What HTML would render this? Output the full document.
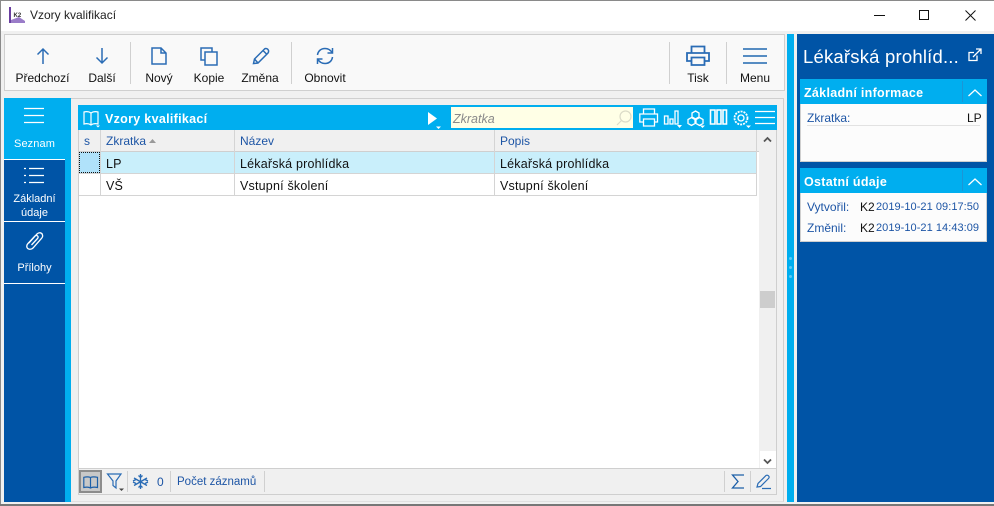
<!DOCTYPE html>
<html><head><meta charset="utf-8">
<style>
html,body{margin:0;padding:0}
body{width:994px;height:506px;position:relative;overflow:hidden;background:#f0f0f0;font-family:"Liberation Sans",sans-serif;font-size:12px;color:#111}
.a{position:absolute}
.t{position:absolute;white-space:nowrap}
.c{text-align:center}
.b{color:#1d55a5}
.r{font-size:12.500px;letter-spacing:.2px}
.h{color:#fff;font-weight:700;font-size:12.500px;letter-spacing:.3px}
.l{font-size:12px;top:71px;color:#111}
svg{position:absolute;overflow:visible}
.tb svg{fill:none;stroke:#2a6cb5;stroke-width:1.5}
.w svg,svg.w{fill:none;stroke:#fff;stroke-width:1.3}
.sep{position:absolute;width:1px;background:#d0d0d0}
</style></head><body>
<div class="a" style="left:0;top:0;width:994px;height:31px;background:#fff"></div>
<div class="a" style="left:0;top:0;width:994px;height:1px;background:#8a8a8a"></div>
<div class="a" style="left:0;top:0;width:1px;height:506px;background:#8a8a8a"></div>
<div class="a" style="left:0;top:504px;width:994px;height:2px;background:#777"></div>
<!-- title -->
<svg style="left:9px;top:7px" width="17" height="16"><rect x="0" y="0" width="2" height="16" fill="#6a3fa0"/><path d="M2 16 L2 13 L10 10 L16 14 L16 16Z" fill="#9a7cc8"/><text x="4.500" y="10" font-family="Liberation Sans" font-size="6" font-weight="700" fill="#333">K2</text></svg>
<div class="t" style="left:30px;top:8px;font-size:12px;color:#222">Vzory kvalifikací</div>
<svg style="left:874px;top:15px" width="14" height="2"><rect width="11" height="1" fill="#111"/></svg>
<svg style="left:919px;top:10px" width="12" height="12"><rect x=".5" y=".5" width="9" height="9" fill="none" stroke="#111"/></svg>
<svg style="left:965px;top:10px" width="12" height="12"><path d="M.5 .5L10.500 10.500M10.500 .5L.5 10.500" stroke="#111" fill="none"/></svg>
<!-- toolbar -->
<div class="a" style="left:4px;top:34px;width:781px;height:57px;background:#f9f9f9;border:1px solid #cfcfcf;box-sizing:border-box"></div>
<div class="tb">
<svg style="left:36px;top:47px" width="14" height="18"><path d="M7 17V2M1.500 7.500L7 2L12.500 7.500"/></svg>
<svg style="left:95px;top:47px" width="14" height="18"><path d="M7 1V16M1.500 10.500L7 16L12.500 10.500"/></svg>
<svg style="left:151px;top:47px" width="16" height="18"><path d="M1 1H10L15 6V17H1ZM10 1V6H15"/></svg>
<svg style="left:200px;top:47px" width="18" height="19"><path d="M5 13H1V1H12V5M5 5H17V18H5Z"/></svg>
<svg style="left:252px;top:47px" width="18" height="18"><path d="M1.500 16.500L2.500 12L12.500 2C14 .8 16 2 16.500 3.500C16.800 4.500 16.500 5.200 16 6L6 16ZM2.500 12L6 16M11 3.500L15 7.500"/></svg>
<svg style="left:316px;top:47px" width="18" height="18"><path d="M1.500 8C2 4 5 1.500 9 1.500C12 1.500 14.500 3 16 5.500M16.500 1V6H11.500M16.500 10C16 14 13 16.500 9 16.500C6 16.500 3.500 15 2 12.500M1.500 17V12H6.500"/></svg>
<svg style="left:686px;top:45px" width="24" height="22"><path d="M5.500 8V1.500H18.500V8M5.500 16H1V8H23V16H18.500M5.500 12.500H18.500V20H5.500Z" style="stroke-width:1.800"/></svg>
<svg style="left:743px;top:48px" width="24" height="17"><path d="M0 1H24M0 8H24M0 15H24" style="stroke-width:1.800;stroke:#3f7cba"/></svg>
</div>
<div class="t c l" style="left:10px;width:65px">Předchozí</div>
<div class="t c l" style="left:72px;width:60px">Další</div>
<div class="t c l" style="left:129px;width:60px">Nový</div>
<div class="t c l" style="left:179px;width:60px">Kopie</div>
<div class="t c l" style="left:230px;width:60px">Změna</div>
<div class="t c l" style="left:295px;width:60px">Obnovit</div>
<div class="t c l" style="left:668px;width:60px">Tisk</div>
<div class="t c l" style="left:725px;width:60px">Menu</div>
<div class="sep" style="left:130px;top:42px;height:42px"></div>
<div class="sep" style="left:291px;top:42px;height:42px"></div>
<div class="sep" style="left:669px;top:42px;height:42px"></div>
<div class="sep" style="left:726px;top:42px;height:42px"></div>
<!-- left nav -->
<div class="a" style="left:4px;top:98px;width:61px;height:404px;background:#0054a6"></div>
<div class="a" style="left:4px;top:98px;width:67px;height:61px;background:#00aeef"></div>
<div class="a" style="left:65px;top:98px;width:6px;height:404px;background:#00aeef"></div>
<div class="a" style="left:4px;top:159px;width:61px;height:1px;background:#fff"></div>
<div class="a" style="left:4px;top:221px;width:61px;height:1px;background:#fff"></div>
<div class="a" style="left:4px;top:283px;width:61px;height:1px;background:#fff"></div>
<svg class="w" style="left:24px;top:108px" width="20" height="16"><path d="M0 .5H20M0 7.500H20M0 14.500H20"/></svg>
<svg class="w" style="left:24px;top:168px" width="20" height="16"><path d="M0 .5H2M5 .5H20M0 7.500H2M5 7.500H20M0 14.500H2M5 14.500H20"/></svg>
<svg class="w" style="left:25px;top:231px" width="20" height="20"><path d="M4 12L12 3C14 1 17 1.500 17.500 4C18 5.500 17 7 16 8L8 17C6 19 3 18.500 2 16.500C1.500 15 2 13.500 3 12.500L10 5C11 4 12.500 4.500 13 5.500C13.300 6.300 13 7 12.500 7.500L6.500 14"/></svg>
<div class="t c" style="left:4px;width:61px;top:138px;color:#fff;font-size:11px;letter-spacing:.1px">Seznam</div>
<div class="t c" style="left:4px;width:61px;top:192px;color:#fff;font-size:11px;line-height:14px;white-space:normal">Základní<br>údaje</div>
<div class="t c" style="left:4px;width:61px;top:262px;color:#fff;font-size:11px">Přílohy</div>
<!-- main panel -->
<div class="a" style="left:71px;top:98px;width:713px;height:404px;border-top:1px solid #cfcfcf;border-right:1px solid #cfcfcf;border-bottom:1px solid #e0e0e0;box-sizing:border-box;background:#f0f0f0"></div>
<!-- grid frame -->
<div class="a" style="left:78px;top:105px;width:699px;height:390px;background:#fff;border:1px solid #cfcfcf;box-sizing:border-box"></div>
<div class="a" style="left:78px;top:105px;width:699px;height:25px;background:#00aeef"></div>
<svg class="w" style="left:83px;top:110px" width="18" height="17"><path d="M8 3C6 1.500 3 1.500 1 2V14C3 13.500 6 13.500 8 15C10 13.500 13 13.500 15 14V2C13 1.500 10 1.500 8 3ZM8 3V15" style="stroke-width:1.200"/><path d="M13 15.500H17L15 17.500Z" fill="#fff" stroke="none"/></svg>
<div class="t h" style="left:105px;top:112px">Vzory kvalifikací</div>
<svg style="left:428px;top:111px" width="14" height="18"><path d="M0 1L9 7.500L0 14Z" fill="#fff"/><path d="M8 15.500H13L10.500 18Z" fill="#fff"/></svg>
<div class="a" style="left:451px;top:107px;width:182px;height:21px;background:#ffffe6"></div>
<div class="t" style="left:453px;top:112px;font-style:italic;color:#8a8a8a;font-size:12.500px">Zkratka</div>
<svg style="left:616px;top:110px" width="16" height="16"><circle cx="9.500" cy="6.500" r="5.500" fill="none" stroke="#dcdcc8" stroke-width="1.200"/><path d="M5.500 10.500L1 15" stroke="#dcdcc8" stroke-width="1.200"/></svg>
<svg class="w" style="left:639px;top:108px" width="20" height="20"><path d="M4.500 6V1H15.500V6M4.500 14H.8V6H18.500V14H15.500M4.500 11H15.500V18H4.500Z"/></svg>
<svg class="w" style="left:664px;top:110px" width="18" height="18"><path d="M.5 6H4V14H.5ZM6 9H9V14H6ZM11 1H14V14H11Z"/><path d="M13 15H18L15.500 18Z" fill="#fff" stroke="none"/></svg>
<svg class="w" style="left:687px;top:110px" width="19" height="18"><path d="M8.500 1L12 3V7L8.500 9L5 7V3ZM4.500 7.500L8 9.500V13.500L4.500 15.500L1 13.500V9.500ZM12.500 7.500L16 9.500V13.500L12.500 15.500L9 13.500V9.500Z"/><path d="M13 15.500H18L15.500 18Z" fill="#fff" stroke="none"/></svg>
<svg class="w" style="left:710px;top:109px" width="18" height="19"><path d="M.5 1H5V15H.5ZM7 1H11V15H7ZM13 1H16.500V15H13Z" style="stroke-width:1.600"/></svg>
<svg class="w" style="left:733px;top:110px" width="18" height="18"><circle cx="8" cy="8" r="6.500" style="stroke-width:1.800;stroke-dasharray:2 1"/><circle cx="8" cy="8" r="3"/><path d="M13 15.500H18L15.500 18Z" fill="#fff" stroke="none"/></svg>
<svg class="w" style="left:755px;top:111px" width="20" height="14"><path d="M0 .5H20M0 6.500H20M0 12.500H20"/></svg>
<!-- header row -->
<div class="a" style="left:79px;top:130px;width:680px;height:21px;background:#f0f0f0;border-bottom:1px solid #cfcfcf"></div>
<div class="a" style="left:759px;top:130px;width:17px;height:338px;background:#f0f0f0"></div>
<div class="a" style="left:79px;top:152px;width:678px;height:21px;background:#c9effb"></div>
<div class="a" style="left:79px;top:152px;width:21px;height:21px;background:#b0e2fa;outline:1px dotted #111;outline-offset:-1px"></div>
<div class="a" style="left:79px;top:173px;width:678px;height:1px;background:#d4d4d4"></div>
<div class="a" style="left:79px;top:195px;width:678px;height:1px;background:#d4d4d4"></div>
<div class="a" style="left:100px;top:130px;width:1px;height:66px;background:#d4d4d4"></div>
<div class="a" style="left:234px;top:130px;width:1px;height:66px;background:#d4d4d4"></div>
<div class="a" style="left:494px;top:130px;width:1px;height:66px;background:#d4d4d4"></div>
<div class="a" style="left:756px;top:130px;width:1px;height:66px;background:#d4d4d4"></div>
<div class="t b" style="left:84px;top:134px;font-size:12px">s</div>
<div class="t b" style="left:106px;top:134px;font-size:12px">Zkratka</div>
<svg style="left:149px;top:139px" width="8" height="4"><path d="M0 4L3.500 0L7 4Z" fill="#999"/></svg>
<div class="t b" style="left:240px;top:134px;font-size:12px">Název</div>
<div class="t b" style="left:500px;top:134px;font-size:12px">Popis</div>
<div class="t r" style="left:106px;top:157px">LP</div>
<div class="t r" style="left:240px;top:157px">Lékařská prohlídka</div>
<div class="t r" style="left:500px;top:157px">Lékařská prohlídka</div>
<div class="t r" style="left:106px;top:179px">VŠ</div>
<div class="t r" style="left:240px;top:179px">Vstupní školení</div>
<div class="t r" style="left:500px;top:179px">Vstupní školení</div>
<!-- scrollbar -->
<svg style="left:763px;top:136px" width="10" height="7"><path d="M1 5.500L4.500 2L8 5.500" fill="none" stroke="#555" stroke-width="1.800"/></svg>
<div class="a" style="left:760px;top:291px;width:15px;height:17px;background:#cdcdcd"></div>
<div class="a" style="left:760px;top:451px;width:16px;height:17px;background:#fff"></div>
<svg style="left:763px;top:458px" width="10" height="7"><path d="M1 1.500L4.500 5L8 1.500" fill="none" stroke="#555" stroke-width="1.800"/></svg>
<!-- footer -->
<div class="a" style="left:79px;top:468px;width:697px;height:26px;background:#f0f0f0;border-top:1px solid #cfcfcf;box-sizing:border-box"></div>
<div class="a" style="left:79px;top:470px;width:23px;height:23px;background:#c8c8c8;border:2px solid #8c8c8c;box-sizing:border-box"></div>
<svg style="left:83px;top:476px" width="16" height="13"><path d="M7.500 1.500C6 .8 3 .8 .8 1.300V11.500C3 11 6 11 7.500 12C9 11 12 11 14.500 11.500V1.300C12 .8 9 .8 7.500 1.500ZM7.500 1.500V12" fill="none" stroke="#1d5fa8" stroke-width="1.200"/></svg>
<svg style="left:107px;top:473px" width="18" height="20"><path d="M.5 1H14L9 8V15L6 12.500V8Z" fill="none" stroke="#2a6cb5" stroke-width="1.200"/><path d="M12 15.500H17L14.500 18Z" fill="#444"/></svg>
<div class="sep" style="left:127px;top:471px;height:21px"></div>
<svg style="left:133px;top:474px" width="15" height="16"><path d="M7.500 0V15M1 4L14 11.500M14 4L1 11.500M5.500 1.500L7.500 3.500L9.500 1.500M5.500 13.500L7.500 11.500L9.500 13.500M0 7L3 5.500M3 9.500L0 8M15 7L12 5.500M12 9.500L15 8" fill="none" stroke="#2a6cb5" stroke-width="1.300"/></svg>
<div class="t b" style="left:157px;top:475px;font-size:12px">0</div>
<div class="sep" style="left:170px;top:471px;height:21px"></div>
<div class="t b" style="left:177px;top:476px;font-size:11.500px">Počet záznamů</div>
<div class="sep" style="left:264px;top:471px;height:21px"></div>
<div class="sep" style="left:724px;top:471px;height:21px"></div>
<div class="sep" style="left:750px;top:471px;height:21px"></div>
<svg style="left:731px;top:474px" width="14" height="15"><path d="M13 1H1.500L7 7.500L1.500 14H13" fill="none" stroke="#1d5fa8" stroke-width="1.300"/></svg>
<svg style="left:756px;top:474px" width="16" height="15"><path d="M1 13L2 9.500L10 1.500C11 .8 12.500 1.500 13 2.500C13.300 3.200 13 4 12.500 4.500L4.500 12.500ZM6 14.500H15" fill="none" stroke="#2a6cb5" stroke-width="1.200"/></svg>
<!-- splitter -->
<div class="a" style="left:787px;top:34px;width:7px;height:468px;background:#00aeef"></div>
<div class="a" style="left:789px;top:257px;width:3px;height:3px;border-radius:50%;background:#5cc8f5"></div>
<div class="a" style="left:789px;top:266px;width:3px;height:3px;border-radius:50%;background:#5cc8f5"></div>
<div class="a" style="left:789px;top:275px;width:3px;height:3px;border-radius:50%;background:#5cc8f5"></div>
<!-- right panel -->
<div class="a" style="left:797px;top:34px;width:197px;height:468px;background:#0054a6"></div>
<div class="t" style="left:803px;top:46px;color:#fff;font-size:18.500px;letter-spacing:.2px">Lékařská prohlíd...</div>
<svg class="w" style="left:968px;top:48px" width="14" height="14"><path d="M9 7.500V12.500H1V4.500H6M5 9L12.500 1.500M8 1H13V6"/></svg>
<div class="a" style="left:800px;top:79px;width:187px;height:83px;background:#fcfcfc;border:1px solid #cfcfcf;box-sizing:border-box"></div>
<div class="a" style="left:800px;top:79px;width:187px;height:25px;background:#00aeef"></div>
<div class="a" style="left:962px;top:81px;width:1px;height:21px;background:#1c95d6"></div>
<svg class="w" style="left:968px;top:89px" width="14" height="8"><path d="M.5 7L7 1L13.500 7"/></svg>
<div class="t h" style="left:804px;top:86px">Základní informace</div>
<div class="t b" style="left:807px;top:111px;font-size:12px">Zkratka:</div>
<div class="t" style="left:967px;top:111px;font-size:12px">LP</div>
<div class="a" style="left:807px;top:125px;width:173px;height:1px;background:#e2e2e2"></div>
<div class="a" style="left:800px;top:168px;width:187px;height:74px;background:#fcfcfc;border:1px solid #cfcfcf;box-sizing:border-box"></div>
<div class="a" style="left:800px;top:168px;width:187px;height:25px;background:#00aeef"></div>
<div class="a" style="left:962px;top:170px;width:1px;height:21px;background:#1c95d6"></div>
<svg class="w" style="left:968px;top:178px" width="14" height="8"><path d="M.5 7L7 1L13.500 7"/></svg>
<div class="t h" style="left:804px;top:175px">Ostatní údaje</div>
<div class="t b" style="left:807px;top:200px;font-size:12px">Vytvořil:</div>
<div class="t" style="left:860px;top:200px;font-size:12px">K2</div>
<div class="t b" style="left:876px;top:201px;font-size:11px;letter-spacing:.05px">2019-10-21 09:17:50</div>
<div class="t b" style="left:807px;top:221px;font-size:12px">Změnil:</div>
<div class="t" style="left:860px;top:221px;font-size:12px">K2</div>
<div class="t b" style="left:876px;top:222px;font-size:11px;letter-spacing:.05px">2019-10-21 14:43:09</div>
</body></html>
